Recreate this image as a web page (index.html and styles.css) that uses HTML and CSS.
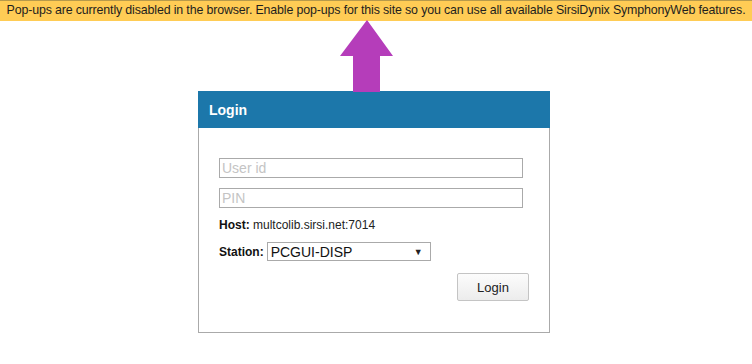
FILE: index.html
```html
<!DOCTYPE html>
<html>
<head>
<meta charset="utf-8">
<link rel="stylesheet" href="styles.css">
</head>
<body>
<div class="banner">Pop-ups are currently disabled in the browser. Enable pop-ups for this site so you can use all available SirsiDynix SymphonyWeb features.</div>
<svg class="arrow" width="54" height="72" viewBox="0 0 54 72"><polygon points="27,0 53,36 40,36 40,72 13,72 13,36 0,36" fill="#b53dba"/></svg>
<div class="panel">
  <div class="panel-head">Login</div>
  <div class="panel-body">
    <input class="field" type="text" placeholder="User id">
    <input class="field pin" type="password" placeholder="PIN">
    <div class="host"><b>Host:</b> multcolib.sirsi.net:7014</div>
    <div class="station">
      <b>Station:</b>
      <div class="select"><span>PCGUI-DISP</span><span class="caret">&#9660;</span></div>
    </div>
    <div class="actions"><button class="btn">Login</button></div>
  </div>
</div>
</body>
</html>
```
FILE: styles.css
```css
html, body { margin: 0; padding: 0; background: #fff; }
body { font-family: "Liberation Sans", Arial, sans-serif; color: #222; position: relative; }
.banner {
  background: #ffcc55;
  border-top: 1px solid #b89a4a;
  height: 20px;
  line-height: 19px;
  font-size: 12.4px;
  letter-spacing: -0.14px;
  color: #1e1e1e;
  text-align: center;
  white-space: nowrap;
  overflow: hidden;
}
.arrow { position: absolute; left: 340px; top: 20px; }
.panel { margin: 70px 0 0 198px; width: 352px; }
.panel-head {
  background: #1c77aa;
  color: #fff;
  font-weight: bold;
  font-size: 14px;
  height: 37px;
  line-height: 38px;
  padding-left: 11px;
}
.panel-body {
  border: 1px solid #aaa;
  border-top: 0;
  height: 205px;
  padding: 30px 20px 0 20px;
  display: flex;
  flex-direction: column;
  box-sizing: border-box;
}
.field {
  width: 304px;
  height: 20px;
  box-sizing: border-box;
  border: 1px solid #aaa;
  margin: 0;
  padding: 0 2px;
  font-family: "Liberation Sans", Arial, sans-serif;
  font-size: 14px;
  outline: none;
}
.field::placeholder { color: #c4c4c4; }
.pin { margin-top: 10px; }
.host { margin-top: 9px; font-size: 12px; line-height: 16px; color: #222; }
.host b { color: #111; }
.station { margin-top: 9px; display: flex; align-items: center; font-size: 12px; gap: 3px; }
.station b { color: #111; }
.select {
  width: 164px;
  height: 19px;
  box-sizing: border-box;
  border: 1px solid #aaa;
  display: flex;
  align-items: center;
  justify-content: space-between;
  padding: 0 7px 0 3px;
  font-size: 14px;
  color: #111;
}
.caret { font-size: 9px; color: #222; }
.actions { display: flex; justify-content: flex-end; margin-top: 12px; }
.btn {
  width: 72px;
  height: 28px;
  border: 1px solid #c4c4c4;
  border-radius: 2px;
  background: linear-gradient(#fcfcfc, #ececec);
  font-family: "Liberation Sans", Arial, sans-serif;
  font-size: 13px;
  color: #222;
  padding: 0;
}
```
